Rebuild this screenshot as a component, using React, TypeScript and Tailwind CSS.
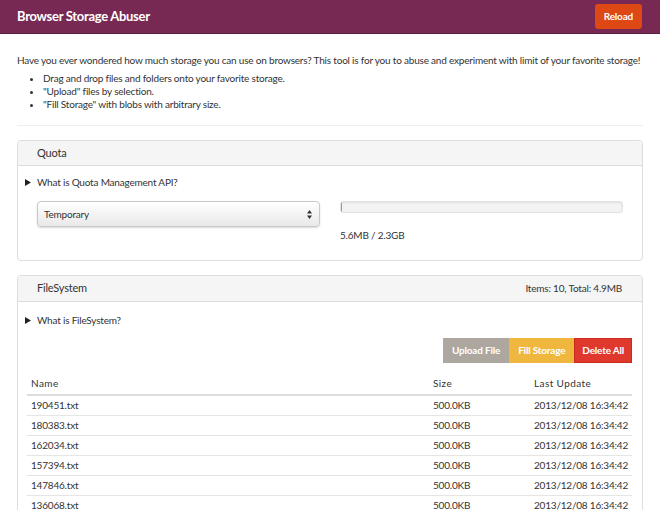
const FILES = [
  { name: "190451.txt", size: "500.0KB", date: "2013/12/08 16:34:42" },
  { name: "180383.txt", size: "500.0KB", date: "2013/12/08 16:34:42" },
  { name: "162034.txt", size: "500.0KB", date: "2013/12/08 16:34:42" },
  { name: "157394.txt", size: "500.0KB", date: "2013/12/08 16:34:42" },
  { name: "147846.txt", size: "500.0KB", date: "2013/12/08 16:34:42" },
  { name: "136068.txt", size: "500.0KB", date: "2013/12/08 16:34:42" },
  { name: "121937.txt", size: "500.0KB", date: "2013/12/08 16:34:42" },
];

function Disclosure({ label }: { label: string }) {
  return (
    <div className="flex items-center h-[14px] leading-[14px]">
      <svg width="6" height="7" viewBox="0 0 6 7" className="ml-[1px] mr-[6px]">
        <path d="M0 0 L6 3.5 L0 7 Z" fill="#222" />
      </svg>
      <span>{label}</span>
    </div>
  );
}

function Panel({ title, right, tall, children }: { title: string; right?: string; tall?: boolean; children: React.ReactNode }) {
  return (
    <div className="border border-[#ddd] rounded-[4px] overflow-hidden">
      <div className={`${tall ? "h-[26px]" : "h-[25px]"} bg-[#f5f5f5] border-b border-[#ddd] pl-[19px] pr-[20px] flex items-center justify-between`}>
        <span className="text-[11px]">{title}</span>
        {right && <span className="text-[10px]">{right}</span>}
      </div>
      {children}
    </div>
  );
}

export default function App() {
  return (
    <div className="w-[660px] h-[510px] overflow-hidden bg-white text-[#333] text-[10px] tracking-[-0.2px] font-['Lato',sans-serif]">
      <div className="h-[34px] bg-[#772953] border-b border-[#5a1f40] px-[17px] flex items-center justify-between">
        <h1 className="text-white font-bold text-[13px] tracking-[-0.3px]">Browser Storage Abuser</h1>
        <button className="h-[25px] px-[9px] rounded-[3px] bg-[#dd4814] text-white font-bold text-[10px] mr-[1px]">Reload</button>
      </div>

      <div className="px-[17px]">
        <p className="mt-[19px] leading-[14px] whitespace-nowrap">
          Have you ever wondered how much storage you can use on browsers? This tool is for you to abuse and experiment with limit of your favorite storage!
        </p>
        <ul className="mt-[5px] pl-[26px] list-disc leading-[13px]">
          <li>Drag and drop files and folders onto your favorite storage.</li>
          <li>"Upload" files by selection.</li>
          <li>"Fill Storage" with blobs with arbitrary size.</li>
        </ul>
        <div className="mt-[14px] mb-[14px] border-t border-[#eee]" />

        <Panel title="Quota">
          <div className="px-[6px] pt-[9px] pb-[18px]">
            <Disclosure label="What is Quota Management API?" />
            <div className="mt-[12px] px-[13px] grid grid-cols-2 gap-[20px]">
              <div className="h-[26px] rounded-[4px] border border-[#c8c8c8] bg-gradient-to-b from-white to-[#e9e9e9] shadow-[0_1px_2px_rgba(0,0,0,0.15)] flex items-center justify-between pl-[6px] pr-[7px]">
                <span>Temporary</span>
                <svg width="5" height="9" viewBox="0 0 5 9">
                  <path d="M0 3.5 L2.5 0 L5 3.5 Z M0 5.5 L2.5 9 L5 5.5 Z" fill="#333" />
                </svg>
              </div>
              <div>
                <div className="h-[12px] rounded-[3px] bg-[#f3f3f3] border border-[#e2e2e2] shadow-[inset_0_1px_2px_rgba(0,0,0,0.08)] overflow-hidden">
                  <div className="h-full w-[1px] bg-[#999]" />
                </div>
                <div className="mt-[15px] leading-[14px]">5.6MB / 2.3GB</div>
              </div>
            </div>
          </div>
        </Panel>

        <div className="mt-[14px]">
          <Panel title="FileSystem" right="Items: 10, Total: 4.9MB" tall>
            <div className="px-[6px] pt-[11px]">
              <Disclosure label="What is FileSystem?" />
              <div className="pl-[3px] pr-[4px]">
                <div className="mt-[11px] flex justify-end">
                  <button className="h-[25px] px-[9px] bg-[#aea79f] text-white font-bold text-[10px]">Upload File</button>
                  <button className="h-[25px] px-[9px] bg-[#efb73e] text-white font-bold text-[10px]">Fill Storage</button>
                  <button className="h-[25px] px-[7px] bg-[#df382c] border border-[#c92b1f] text-white font-bold text-[10px]">Delete All</button>
                </div>
                <table className="mt-[10px] w-full table-fixed border-collapse text-left whitespace-nowrap">
                  <colgroup>
                    <col className="w-[402px]" />
                    <col className="w-[101px]" />
                    <col />
                  </colgroup>
                  <thead>
                    <tr className="border-b-2 border-[#ddd] tracking-[0.4px]">
                      <th className="font-normal h-[22px] px-[4px]">Name</th>
                      <th className="font-normal px-[4px]">Size</th>
                      <th className="font-normal px-[4px]">Last Update</th>
                    </tr>
                  </thead>
                  <tbody>
                    {FILES.map((f) => (
                      <tr key={f.name} className="border-b border-[#e5e5e5]">
                        <td className="h-[20px] px-[4px]">{f.name}</td>
                        <td className="px-[4px]">{f.size}</td>
                        <td className="px-[4px]">{f.date}</td>
                      </tr>
                    ))}
                  </tbody>
                </table>
              </div>
            </div>
          </Panel>
        </div>
      </div>
    </div>
  );
}
